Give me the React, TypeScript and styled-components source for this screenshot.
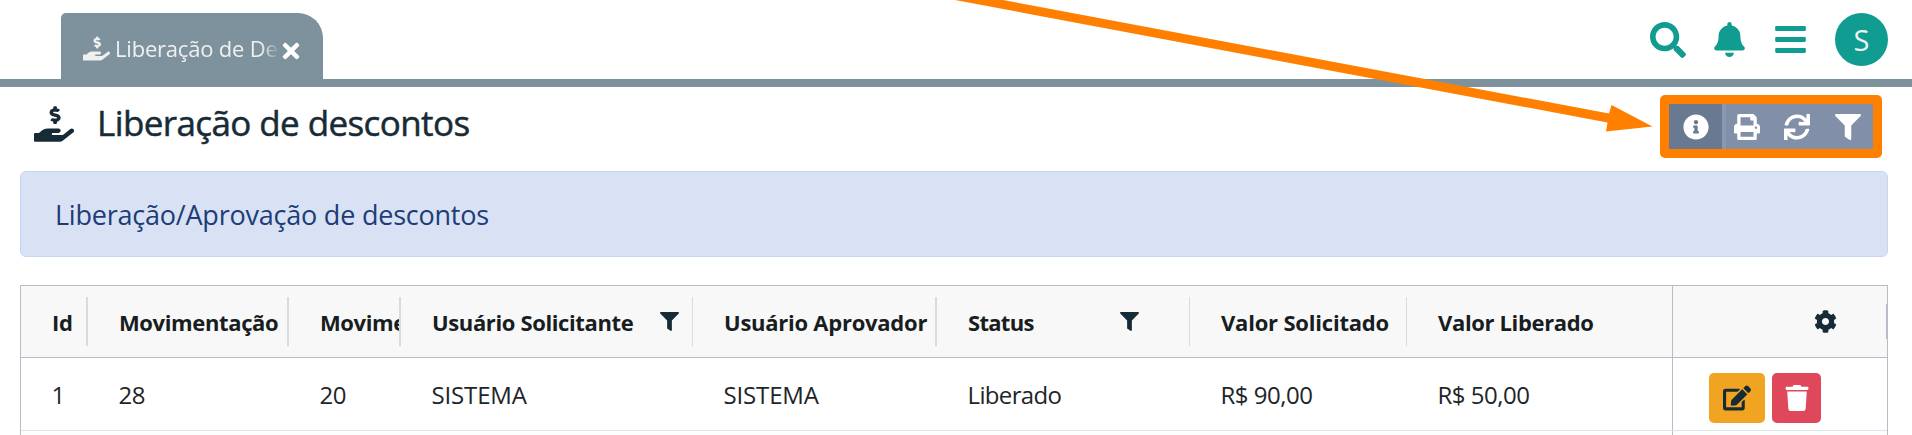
import React from "react";
import styled, { createGlobalStyle } from "styled-components";
import {
  FaBars, FaBell, FaCog, FaEdit, FaFilter, FaHandHoldingUsd, FaInfoCircle,
  FaPrint, FaSearch, FaSync, FaTimes, FaTrash,
} from "react-icons/fa";

const GlobalStyle = createGlobalStyle`
  * { box-sizing: border-box; }
  body { margin: 0; background: #fff; overflow: hidden; }
  svg { display: block; flex: none; }
`;

const Page = styled.div`
  position: relative;
  height: 435px;
  overflow: hidden;
  display: flex;
  flex-direction: column;
  font-family: "Open Sans", "Noto Sans", sans-serif;
  color: #212529;
`;

const TopBar = styled.header`
  height: 87px;
  flex: none;
  display: flex;
  justify-content: space-between;
  padding: 13px 24px 0 61px;
  border-bottom: 8px solid #7d929c;
`;

const Tab = styled.div`
  width: 262px;
  height: 66px;
  display: flex;
  align-items: center;
  padding: 4px 0 0 22px;
  border-radius: 5px 25px 0 0;
  background: #7d929c;
  color: #f0f0f0;
`;

const TabLabel = styled.span`
  width: 163px;
  margin-left: 5px;
  overflow: hidden;
  white-space: nowrap;
  font-size: 22px;
  line-height: 30px;
  letter-spacing: -0.2px;
  mask-image: linear-gradient(to right, #000 146px, transparent 165px);
`;

const TabClose = styled.span`
  margin: 5px 0 0 1px;
  color: #fff;
`;

const TopActions = styled.nav`
  display: flex;
  align-items: flex-start;
  color: #119c92;
`;

const TopIcon = styled.span<{ $gap: number; $top: number }>`
  margin-right: ${(p) => p.$gap}px;
  padding-top: ${(p) => p.$top}px;
`;

const Avatar = styled.div`
  width: 53px;
  height: 53px;
  border-radius: 50%;
  display: flex;
  align-items: center;
  justify-content: center;
  background: #119c92;
  color: #e9f3f0;
  font-size: 29px;
`;

const TitleBar = styled.div`
  height: 84px;
  flex: none;
  display: flex;
  align-items: flex-start;
  padding: 0 30px 0 34px;
`;

const TitleIcon = styled.span`
  padding-top: 17px;
  color: #172b36;
`;

const Title = styled.h1`
  margin: 14px auto 0 23px;
  font-size: 35px;
  line-height: 44px;
  font-weight: 500;
  letter-spacing: -0.6px;
  color: #172b36;
  -webkit-text-stroke: 0.5px #172b36;
  white-space: nowrap;
`;

const Toolbar = styled.div`
  width: 222px;
  height: 63px;
  margin-top: 8px;
  display: flex;
  border: 9px solid #ff8000;
  border-radius: 5px;
  background: #828fa8;
  color: #fff;
`;

const ToolButton = styled.span<{ $width: number; $active?: boolean }>`
  width: ${(p) => p.$width}px;
  display: flex;
  align-items: center;
  justify-content: center;
  background: ${(p) => (p.$active ? "#6a7992" : "transparent")};
`;

const ToolDivider = styled.span`
  width: 4px;
  background: #8a97ac;
`;

const Notice = styled.div`
  height: 86px;
  flex: none;
  margin: 0 24px 0 20px;
  padding: 26px 34px 0;
  border: 1px solid #c7d6f2;
  border-radius: 6px;
  background: #d8e2f4;
  color: #203c76;
  font-size: 27px;
  line-height: 34px;
  letter-spacing: -0.22px;
`;

const Grid = styled.section`
  margin: 28px 24px 0 20px;
  height: 160px;
  flex: none;
  border: 1px solid #b7bcc7;
`;

const columns = "67px 201px 112px 292px 244px 253px 217px 265px 1fr";

const HeadRow = styled.div`
  display: grid;
  grid-template-columns: ${columns};
  height: 72px;
  border-bottom: 1px solid #b7bcc7;
  background: #f8f8f8;
`;

const HeadCell = styled.div<{ $rule: number }>`
  display: flex;
  align-items: center;
  justify-content: space-between;
  height: 49px;
  margin-top: 11px;
  padding-left: 31px;
  overflow: hidden;
  border-right: ${(p) => p.$rule}px solid #d8dce2;
`;

const HeadText = styled.span<{ $spacing: number }>`
  font-size: 22px;
  line-height: 30px;
  font-weight: 700;
  letter-spacing: ${(p) => p.$spacing}px;
  color: #181d1f;
  white-space: nowrap;
`;

const FilterMark = styled.span<{ $right: number }>`
  margin: 0 ${(p) => p.$right}px 0 0;
  color: #172b36;
`;

const ActionHead = styled.div`
  display: flex;
  align-items: center;
  justify-content: space-between;
  border-left: 1px solid #b7bcc7;
  padding-left: 141px;
  color: #172b36;
`;

const EndGrip = styled.span`
  width: 1px;
  height: 35px;
  background: #b7bcc7;
`;

const BodyRow = styled.div`
  display: grid;
  grid-template-columns: ${columns};
  height: 73px;
  border-bottom: 1px solid #dde2eb;
`;

const Cell = styled.div<{ $spacing: number }>`
  padding: 21px 0 0 30.5px;
  font-size: 24px;
  line-height: 32px;
  letter-spacing: ${(p) => p.$spacing}px;
  white-space: nowrap;
`;

const ActionCell = styled.div`
  display: flex;
  gap: 7px;
  padding: 15px 0 0 36px;
  border-left: 1px solid #b7bcc7;
`;

const RowButton = styled.button<{ $width: number; $bg: string; $fg: string }>`
  width: ${(p) => p.$width}px;
  height: 50px;
  padding: 0;
  border: 0;
  border-radius: 5px;
  display: flex;
  align-items: center;
  justify-content: center;
  background: ${(p) => p.$bg};
  color: ${(p) => p.$fg};
`;

const NextRow = styled.div`
  display: grid;
  grid-template-columns: 1651px 1fr;
  height: 13px;
  background: #fcfdfd;
`;

const NextAction = styled.span`
  border-left: 1px solid #b7bcc7;
`;

const Arrow = styled.svg`
  position: absolute;
  top: 0;
  left: 0;
  pointer-events: none;
`;

type Column = { title: string; value: string; rule: number; hs: number; cs: number; filter?: number };

const data: Column[] = [
  { title: "Id", value: "1", rule: 2, hs: -0.3, cs: -0.3 },
  { title: "Movimentação", value: "28", rule: 2, hs: -0.37, cs: -0.5 },
  { title: "Movimentação", value: "20", rule: 2, hs: -0.4, cs: -0.5 },
  { title: "Usuário Solicitante", value: "SISTEMA", rule: 1, hs: -0.37, cs: -0.15, filter: 13 },
  { title: "Usuário Aprovador", value: "SISTEMA", rule: 2, hs: -0.25, cs: -0.15 },
  { title: "Status", value: "Liberado", rule: 1, hs: -0.7, cs: -0.65, filter: 50 },
  { title: "Valor Solicitado", value: "R$ 90,00", rule: 1, hs: -0.2, cs: -0.5 },
  { title: "Valor Liberado", value: "R$ 50,00", rule: 0, hs: -0.35, cs: -0.5 },
];

export default function App() {
  return (
    <Page>
      <GlobalStyle />
      <TopBar>
        <Tab>
          <FaHandHoldingUsd size={27} />
          <TabLabel>Liberação de Descontos</TabLabel>
          <TabClose><FaTimes size={24} /></TabClose>
        </Tab>
        <TopActions>
          <TopIcon $gap={26} $top={9}><FaSearch size={36} /></TopIcon>
          <TopIcon $gap={26} $top={9}><FaBell size={35} /></TopIcon>
          <TopIcon $gap={27} $top={9}><FaBars size={35} /></TopIcon>
          <Avatar>S</Avatar>
        </TopActions>
      </TopBar>
      <TitleBar>
        <TitleIcon><FaHandHoldingUsd size={40} /></TitleIcon>
        <Title>Liberação de descontos</Title>
        <Toolbar>
          <ToolButton $width={53} $active><FaInfoCircle size={26} /></ToolButton>
          <ToolDivider />
          <ToolButton $width={41}><FaPrint size={26} /></ToolButton>
          <ToolButton $width={60}><FaSync size={26} /></ToolButton>
          <ToolButton $width={42}><FaFilter size={26} /></ToolButton>
        </Toolbar>
      </TitleBar>
      <Notice>Liberação/Aprovação de descontos</Notice>
      <Grid>
        <HeadRow>
          {data.map((c, i) => (
            <HeadCell key={i} $rule={c.rule}>
              <HeadText $spacing={c.hs}>{c.title}</HeadText>
              {c.filter !== undefined && <FilterMark $right={c.filter}><FaFilter size={19} /></FilterMark>}
            </HeadCell>
          ))}
          <ActionHead><FaCog size={23} /><EndGrip /></ActionHead>
        </HeadRow>
        <BodyRow>
          {data.map((c, i) => <Cell key={i} $spacing={c.cs}>{c.value}</Cell>)}
          <ActionCell>
            <RowButton $width={56} $bg="#f0a422" $fg="#172b36"><FaEdit size={28} /></RowButton>
            <RowButton $width={49} $bg="#df475a" $fg="#fff"><FaTrash size={26} /></RowButton>
          </ActionCell>
        </BodyRow>
        <NextRow><span /><NextAction /></NextRow>
      </Grid>
      <Arrow width="1912" height="140" viewBox="0 0 1912 140">
        <path d="M955 0L1003 0L1609 113.500L1611.500 105L1652.500 126.500L1606 131.500L1607.500 122.500Z" fill="#ff8000" />
      </Arrow>
    </Page>
  );
}
